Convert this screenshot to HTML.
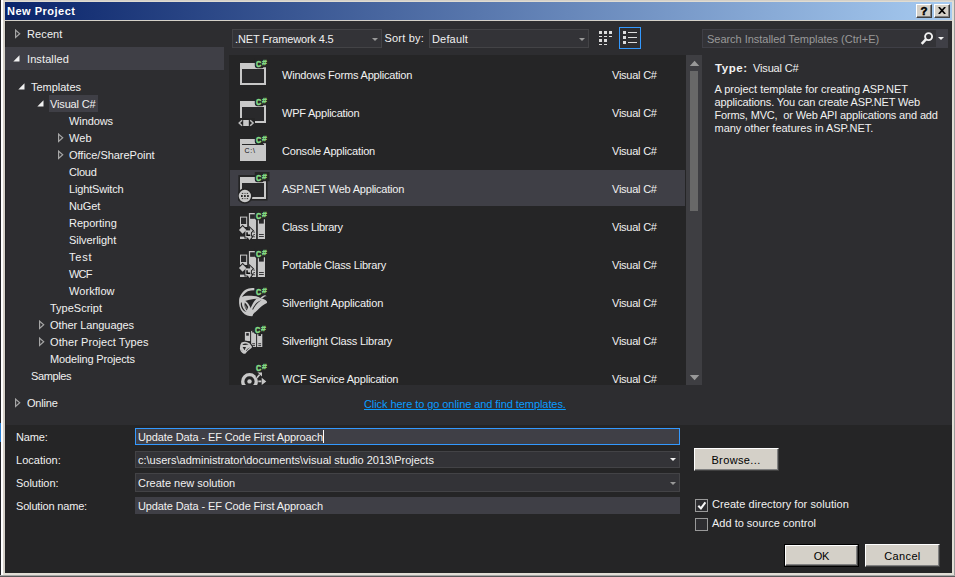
<!DOCTYPE html>
<html lang="en"><head><meta charset="utf-8"><title>New Project</title>
<style>
html,body{margin:0;padding:0;}
body{width:955px;height:577px;overflow:hidden;background:#d4d0c8;position:relative;font-family:"Liberation Sans", "DejaVu Sans", sans-serif;font-size:11px;line-height:17px;color:#f1f1f1;}
div,span,a,svg{position:absolute;box-sizing:border-box;}
.t{white-space:pre;letter-spacing:-0.15px;}
.btn{background:#d4d0c8;border:1px solid;border-color:#fff #404040 #404040 #fff;box-shadow:inset -1px -1px 0 #808080;color:#000;text-align:center;}

</style></head><body>
<div style="left:0px;top:0px;width:955px;height:577px;background:#d4d0c8;"></div>
<div style="left:0px;top:1px;width:955px;height:1px;background:#e0dcd2;"></div>
<div style="left:0px;top:0px;width:1px;height:577px;background:#222226;"></div>
<div style="left:1px;top:0px;width:2px;height:575px;background:#ffffff;"></div>
<div style="left:952px;top:2px;width:2px;height:573px;background:#e2dfd6;"></div>
<div style="left:954px;top:0px;width:1px;height:577px;background:#9a9a9a;"></div>
<div style="left:3px;top:573px;width:951px;height:2px;background:#e2dfd6;"></div>
<div style="left:0px;top:575px;width:955px;height:1px;background:#a8a8a8;"></div>
<div style="left:0px;top:576px;width:955px;height:1px;background:#5a5a5a;"></div>
<div style="left:0px;top:423px;width:1px;height:19px;background:#2a7fd0;"></div>
<div style="left:5px;top:2px;width:947px;height:18px;background:linear-gradient(90deg,#0a246a 0%,#a6caf0 100%);"></div>
<span class="t" style="left:7px;top:3px;letter-spacing:0.50px;color:#fff;font-weight:bold;">New Project</span>
<div class="btn" style="left:916px;top:4px;width:16px;height:14px;"></div>
<div class="btn" style="left:934px;top:4px;width:16px;height:14px;"></div>
<span class="t" style="left:920.500px;top:3px;color:#000;font-weight:bold;font-size:11.500px;-webkit-text-stroke:0.500px #000;line-height:17px;letter-spacing:0">?</span>
<svg style="left:938px;top:7px" width="8" height="7" viewBox="0 0 8 7"><line x1="0.800" y1="0" x2="7.200" y2="7" stroke="#000" stroke-width="1.700"/><line x1="7.200" y1="0" x2="0.800" y2="7" stroke="#000" stroke-width="1.700"/></svg>
<div style="left:5px;top:21px;width:947px;height:404px;background:#2d2d30;"></div>
<div style="left:5px;top:425px;width:947px;height:148px;background:#252526;"></div>
<div style="left:5px;top:21px;width:1px;height:552px;background:#222225;"></div>
<div style="left:229px;top:55px;width:457px;height:330px;background:#252526;"></div>
<div style="left:686px;top:55px;width:16px;height:330px;background:#3e3e42;"></div>
<div style="left:690px;top:71px;width:8px;height:140px;background:#686868;"></div>
<svg style="left:689px;top:60px" width="12" height="7" viewBox="0 0 12 7"><path d="M0.800 6.100L5.550 0.700 10.300 6.100z" fill="#999"/></svg>
<svg style="left:689px;top:374px" width="12" height="7" viewBox="0 0 12 7"><path d="M0.800 1L5.550 6.300 10.300 1z" fill="#999"/></svg>
<div style="left:5px;top:47px;width:219px;height:23px;background:#3f3f46;"></div>
<div style="left:49px;top:95px;width:49px;height:17px;background:#3f3f46;"></div>
<span class="t" style="left:27px;top:26px;letter-spacing:0.11px;">Recent</span>
<svg style="left:15px;top:29px" width="6" height="10" viewBox="0 0 6 10"><path d="M0.600 1.100L4.700 4.800 0.600 8.500z" fill="none" stroke="#a6a6a6" stroke-width="1.2"/></svg>
<span class="t" style="left:27px;top:51px;letter-spacing:0.10px;">Installed</span>
<svg style="left:13px;top:55px" width="7" height="7" viewBox="0 0 7 7"><path d="M6.5 0.3V6.5H0.3z" fill="#f1f1f1"/></svg>
<span class="t" style="left:31px;top:79px;letter-spacing:-0.02px;">Templates</span>
<svg style="left:18px;top:83px" width="7" height="7" viewBox="0 0 7 7"><path d="M6.5 0.3V6.5H0.3z" fill="#f1f1f1"/></svg>
<span class="t" style="left:50px;top:96px;letter-spacing:-0.15px;">Visual C#</span>
<svg style="left:37px;top:100px" width="7" height="7" viewBox="0 0 7 7"><path d="M6.5 0.3V6.5H0.3z" fill="#f1f1f1"/></svg>
<span class="t" style="left:69px;top:113px;letter-spacing:-0.10px;">Windows</span>
<span class="t" style="left:69px;top:130px;letter-spacing:0.04px;">Web</span>
<svg style="left:58px;top:133px" width="6" height="10" viewBox="0 0 6 10"><path d="M0.600 1.100L4.700 4.800 0.600 8.500z" fill="none" stroke="#a6a6a6" stroke-width="1.2"/></svg>
<span class="t" style="left:69px;top:147px;letter-spacing:-0.03px;">Office/SharePoint</span>
<svg style="left:58px;top:150px" width="6" height="10" viewBox="0 0 6 10"><path d="M0.600 1.100L4.700 4.800 0.600 8.500z" fill="none" stroke="#a6a6a6" stroke-width="1.2"/></svg>
<span class="t" style="left:69px;top:164px;letter-spacing:-0.24px;">Cloud</span>
<span class="t" style="left:69px;top:181px;letter-spacing:-0.16px;">LightSwitch</span>
<span class="t" style="left:69px;top:198px;letter-spacing:-0.12px;">NuGet</span>
<span class="t" style="left:69px;top:215px;letter-spacing:0.01px;">Reporting</span>
<span class="t" style="left:69px;top:232px;letter-spacing:-0.05px;">Silverlight</span>
<span class="t" style="left:69px;top:249px;letter-spacing:0.77px;">Test</span>
<span class="t" style="left:69px;top:266px;letter-spacing:-0.77px;">WCF</span>
<span class="t" style="left:69px;top:283px;letter-spacing:0.07px;">Workflow</span>
<span class="t" style="left:50px;top:300px;letter-spacing:0.00px;">TypeScript</span>
<span class="t" style="left:50px;top:317px;letter-spacing:-0.07px;">Other Languages</span>
<svg style="left:39px;top:320px" width="6" height="10" viewBox="0 0 6 10"><path d="M0.600 1.100L4.700 4.800 0.600 8.500z" fill="none" stroke="#a6a6a6" stroke-width="1.2"/></svg>
<span class="t" style="left:50px;top:334px;letter-spacing:0.08px;">Other Project Types</span>
<svg style="left:39px;top:337px" width="6" height="10" viewBox="0 0 6 10"><path d="M0.600 1.100L4.700 4.800 0.600 8.500z" fill="none" stroke="#a6a6a6" stroke-width="1.2"/></svg>
<span class="t" style="left:50px;top:351px;letter-spacing:-0.15px;">Modeling Projects</span>
<span class="t" style="left:31px;top:368px;letter-spacing:-0.40px;">Samples</span>
<span class="t" style="left:27px;top:395px;letter-spacing:-0.20px;">Online</span>
<svg style="left:15px;top:398px" width="6" height="10" viewBox="0 0 6 10"><path d="M0.600 1.100L4.700 4.800 0.600 8.500z" fill="none" stroke="#a6a6a6" stroke-width="1.2"/></svg>
<div style="left:232px;top:29px;width:150px;height:19px;background:#333337;border:1px solid #434346;"></div>
<span class="t" style="left:235px;top:31px;letter-spacing:-0.15px;color:#f1f1f1;">.NET Framework 4.5</span>
<svg style="left:372px;top:38px" width="6" height="3" viewBox="0 0 6 3"><path d="M0 0h6L3 3z" fill="#999"/></svg>
<span class="t" style="left:384.5px;top:30px;letter-spacing:0.20px;">Sort by:</span>
<div style="left:429px;top:29px;width:160px;height:19px;background:#333337;border:1px solid #434346;"></div>
<span class="t" style="left:432px;top:31px;letter-spacing:0.16px;color:#f1f1f1;">Default</span>
<svg style="left:579px;top:38px" width="6" height="3" viewBox="0 0 6 3"><path d="M0 0h6L3 3z" fill="#999"/></svg>
<div style="left:599px;top:31px;width:3px;height:3px;background:#dcdcdc;"></div>
<div style="left:599px;top:36px;width:3px;height:1px;background:#dcdcdc;"></div>
<div style="left:604px;top:31px;width:3px;height:3px;background:#dcdcdc;"></div>
<div style="left:604px;top:36px;width:3px;height:1px;background:#dcdcdc;"></div>
<div style="left:609px;top:31px;width:3px;height:3px;background:#dcdcdc;"></div>
<div style="left:609px;top:36px;width:3px;height:1px;background:#dcdcdc;"></div>
<div style="left:599px;top:39px;width:3px;height:3px;background:#dcdcdc;"></div>
<div style="left:599px;top:44px;width:3px;height:1px;background:#dcdcdc;"></div>
<div style="left:604px;top:39px;width:3px;height:3px;background:#dcdcdc;"></div>
<div style="left:604px;top:44px;width:3px;height:1px;background:#dcdcdc;"></div>
<div style="left:619px;top:27px;width:22px;height:22px;border:1px solid #3399ff;"></div>
<div style="left:623px;top:31px;width:3px;height:3px;background:#dcdcdc;"></div>
<div style="left:628px;top:32px;width:9px;height:1px;background:#dcdcdc;"></div>
<div style="left:623px;top:36px;width:3px;height:3px;background:#dcdcdc;"></div>
<div style="left:628px;top:37px;width:9px;height:1px;background:#dcdcdc;"></div>
<div style="left:623px;top:41px;width:3px;height:3px;background:#dcdcdc;"></div>
<div style="left:628px;top:42px;width:9px;height:1px;background:#dcdcdc;"></div>
<div style="left:702px;top:29px;width:246px;height:19px;background:#333337;border:1px solid #3f3f46;"></div>
<div style="left:936px;top:29px;width:12px;height:19px;background:#3f3f46;"></div>
<span class="t" style="left:707px;top:31px;letter-spacing:-0.03px;color:#999;">Search Installed Templates (Ctrl+E)</span>
<svg style="left:919px;top:30px" width="16" height="16" viewBox="0 0 16 16"><circle cx="9.6" cy="6.6" r="3.5" fill="none" stroke="#f1f1f1" stroke-width="1.9"/><path d="M7.100 9.200L2.700 13.800" stroke="#f1f1f1" stroke-width="2.600"/></svg>
<svg style="left:938px;top:37px" width="6" height="3" viewBox="0 0 6 3"><path d="M0 0h6L3 3z" fill="#f1f1f1"/></svg>
<div style="left:229px;top:55px;width:457px;height:330px;overflow:hidden;">
<span class="t" style="left:53px;top:12px;letter-spacing:-0.20px;">Windows Forms Application</span>
<span class="t" style="left:383px;top:12px;letter-spacing:-0.24px;">Visual C#</span>
<svg style="left:9px;top:3px" width="32" height="34" viewBox="0 0 32 34"><rect x="2" y="5" width="26" height="22" fill="#c8c8c8"/><rect x="4" y="11" width="22" height="14" fill="#29292b"/><path d="M16.8 0H31.500V9.200H25.5Q25 10.200 24 10.200H19.5Q16.8 10.200 16.8 7.500Z" fill="#252526"/><g font-family="Liberation Sans, sans-serif" font-weight="bold" fill="#86dc86" stroke="#86dc86"><text transform="translate(18.00 8.600) scale(0.8 1)" font-size="9" stroke-width="0.550">C</text><text transform="translate(24.10 7) scale(1.3 1)" font-size="6.600" stroke-width="0.300">#</text></g></svg>
<span class="t" style="left:53px;top:50px;letter-spacing:-0.22px;">WPF Application</span>
<span class="t" style="left:383px;top:50px;letter-spacing:-0.24px;">Visual C#</span>
<svg style="left:9px;top:41px" width="32" height="34" viewBox="0 0 32 34"><rect x="2" y="5" width="26" height="22" fill="#c8c8c8"/><rect x="4" y="11" width="22" height="14" fill="#29292b"/><rect x="0" y="22" width="17" height="10" fill="#252526"/><path d="M4.100 24.200L1.200 27l2.900 2.800M12.200 24.200l2.900 2.800-2.900 2.800" fill="none" stroke="#bdbdbd" stroke-width="1.500"/><rect x="5.2" y="24" width="5.6" height="6" fill="#c8c8c8"/><path d="M16.8 0H31.500V9.200H25.5Q25 10.200 24 10.200H19.5Q16.8 10.200 16.8 7.500Z" fill="#252526"/><g font-family="Liberation Sans, sans-serif" font-weight="bold" fill="#86dc86" stroke="#86dc86"><text transform="translate(18.00 8.600) scale(0.8 1)" font-size="9" stroke-width="0.550">C</text><text transform="translate(24.10 7) scale(1.3 1)" font-size="6.600" stroke-width="0.300">#</text></g></svg>
<span class="t" style="left:53px;top:88px;letter-spacing:-0.19px;">Console Application</span>
<span class="t" style="left:383px;top:88px;letter-spacing:-0.24px;">Visual C#</span>
<svg style="left:9px;top:79px" width="32" height="34" viewBox="0 0 32 34"><rect x="2" y="5" width="26" height="22" fill="#c8c8c8"/><rect x="4" y="10" width="22" height="1" fill="#29292b"/><text x="6.5" y="19" font-family="Liberation Sans, sans-serif" font-size="7" fill="#0c0c0c" letter-spacing="0.800">C:\</text><path d="M16.8 0H31.500V9.200H25.5Q25 10.200 24 10.200H19.5Q16.8 10.200 16.8 7.500Z" fill="#252526"/><g font-family="Liberation Sans, sans-serif" font-weight="bold" fill="#86dc86" stroke="#86dc86"><text transform="translate(18.00 8.600) scale(0.8 1)" font-size="9" stroke-width="0.550">C</text><text transform="translate(24.10 7) scale(1.3 1)" font-size="6.600" stroke-width="0.300">#</text></g></svg>
<div style="left:1px;top:115px;width:455px;height:36px;background:#3f3f46;"></div>
<span class="t" style="left:53px;top:126px;letter-spacing:-0.22px;">ASP.NET Web Application</span>
<span class="t" style="left:383px;top:126px;letter-spacing:-0.24px;">Visual C#</span>
<svg style="left:9px;top:117px" width="32" height="34" viewBox="0 0 32 34"><rect x="0.300" y="3" width="29.300" height="25.600" fill="#252526"/><rect x="2" y="5" width="26" height="22" fill="#c8c8c8"/><rect x="4" y="11" width="22" height="14" fill="#29292b"/><circle cx="6.9" cy="24.050" r="7.700" fill="#252526"/><circle cx="6.9" cy="24.050" r="6.200" fill="#c8c8c8"/><rect x="3.0" y="23.150" width="1.700" height="1.750" fill="#111"/><rect x="6.05" y="23.150" width="1.700" height="1.750" fill="#111"/><rect x="9.1" y="23.150" width="1.700" height="1.750" fill="#111"/><rect x="3.800" y="20.9" width="1.400" height="0.900" fill="#222"/><rect x="5.900" y="20.9" width="2.100" height="0.900" fill="#777"/><rect x="8.700" y="20.9" width="1.400" height="0.900" fill="#222"/><rect x="3.800" y="26.2" width="1.400" height="0.900" fill="#222"/><rect x="5.900" y="26.2" width="2.100" height="0.900" fill="#777"/><rect x="8.700" y="26.2" width="1.400" height="0.900" fill="#222"/><path d="M16.8 0H31.500V9.200H25.5Q25 10.200 24 10.200H19.5Q16.8 10.200 16.8 7.500Z" fill="#252526"/><g font-family="Liberation Sans, sans-serif" font-weight="bold" fill="#86dc86" stroke="#86dc86"><text transform="translate(18.00 8.600) scale(0.8 1)" font-size="9" stroke-width="0.550">C</text><text transform="translate(24.10 7) scale(1.3 1)" font-size="6.600" stroke-width="0.300">#</text></g></svg>
<span class="t" style="left:53px;top:164px;letter-spacing:-0.27px;">Class Library</span>
<span class="t" style="left:383px;top:164px;letter-spacing:-0.24px;">Visual C#</span>
<svg style="left:9px;top:155px" width="32" height="34" viewBox="0 0 32 34"><rect x="2" y="6.600" width="7.200" height="22.400" fill="#c8c8c8"/><rect x="3" y="7.600" width="5.200" height="6.400" fill="#29292b"/><rect x="10.900" y="3" width="7.200" height="26" fill="#c8c8c8"/><rect x="12.100" y="4.300" width="4.800" height="4.500" fill="#29292b"/><rect x="19.800" y="9" width="7.200" height="20" fill="#c8c8c8"/><rect x="21" y="8" width="4.800" height="5.600" fill="#29292b"/><rect x="21" y="24" width="4.800" height="0.900" fill="#29292b"/><rect x="21" y="26" width="4.800" height="0.900" fill="#29292b"/><rect x="15.500" y="21.600" width="1.300" height="1" fill="#29292b"/><rect x="15.500" y="24" width="1.300" height="1" fill="#29292b"/><rect x="15.500" y="26.300" width="1.300" height="1" fill="#29292b"/><rect x="1.500" y="17" width="8.500" height="9.600" fill="#252526"/><g stroke="#252526" stroke-width="2" stroke-linejoin="miter"><path d="M4.650 16.200l3.700 3.750-3.700 3.750-3.700-3.750z"/><rect x="7.400" y="20.400" width="5.500" height="7.100"/><path d="M12.100 18.100l2.700 2.700-2.700 2.500z"/><path d="M9 26.600h5.200l-2.700 3.400z"/></g><g fill="#c8c8c8"><path d="M4.650 16.200l3.700 3.750-3.700 3.750-3.700-3.750z"/><rect x="7.400" y="20.400" width="5.500" height="7.100"/><path d="M12.100 18.100l2.700 2.700-2.700 2.500z"/><path d="M9 26.600h5.200l-2.700 3.400z"/></g><path d="M8.300 22.300h1.500v2.200h2.400v1.500h-3.900z" fill="#0c0c0c"/><path d="M16.8 0H31.500V9.200H25.5Q25 10.200 24 10.200H19.5Q16.8 10.200 16.8 7.500Z" fill="#252526"/><g font-family="Liberation Sans, sans-serif" font-weight="bold" fill="#86dc86" stroke="#86dc86"><text transform="translate(18.00 8.600) scale(0.8 1)" font-size="9" stroke-width="0.550">C</text><text transform="translate(24.10 7) scale(1.3 1)" font-size="6.600" stroke-width="0.300">#</text></g></svg>
<span class="t" style="left:53px;top:202px;letter-spacing:-0.19px;">Portable Class Library</span>
<span class="t" style="left:383px;top:202px;letter-spacing:-0.24px;">Visual C#</span>
<svg style="left:9px;top:193px" width="32" height="34" viewBox="0 0 32 34"><rect x="2" y="6.600" width="7.200" height="22.400" fill="#c8c8c8"/><rect x="3" y="7.600" width="5.200" height="6.400" fill="#29292b"/><rect x="10.900" y="3" width="7.200" height="26" fill="#c8c8c8"/><rect x="12.100" y="4.300" width="4.800" height="4.500" fill="#29292b"/><rect x="19.800" y="9" width="7.200" height="20" fill="#c8c8c8"/><rect x="21" y="8" width="4.800" height="5.600" fill="#29292b"/><rect x="21" y="24" width="4.800" height="0.900" fill="#29292b"/><rect x="21" y="26" width="4.800" height="0.900" fill="#29292b"/><rect x="15.500" y="21.600" width="1.300" height="1" fill="#29292b"/><rect x="15.500" y="24" width="1.300" height="1" fill="#29292b"/><rect x="15.500" y="26.300" width="1.300" height="1" fill="#29292b"/><rect x="1.500" y="17" width="8.500" height="9.600" fill="#252526"/><g stroke="#252526" stroke-width="2" stroke-linejoin="miter"><path d="M4.650 16.200l3.700 3.750-3.700 3.750-3.700-3.750z"/><rect x="7.400" y="20.400" width="5.500" height="7.100"/><path d="M12.100 18.100l2.700 2.700-2.700 2.500z"/><path d="M9 26.600h5.200l-2.700 3.400z"/></g><g fill="#c8c8c8"><path d="M4.650 16.200l3.700 3.750-3.700 3.750-3.700-3.750z"/><rect x="7.400" y="20.400" width="5.500" height="7.100"/><path d="M12.100 18.100l2.700 2.700-2.700 2.500z"/><path d="M9 26.600h5.200l-2.700 3.400z"/></g><path d="M8.300 22.300h1.500v2.200h2.400v1.500h-3.900z" fill="#0c0c0c"/><path d="M16.8 0H31.500V9.200H25.5Q25 10.200 24 10.200H19.5Q16.8 10.200 16.8 7.500Z" fill="#252526"/><g font-family="Liberation Sans, sans-serif" font-weight="bold" fill="#86dc86" stroke="#86dc86"><text transform="translate(18.00 8.600) scale(0.8 1)" font-size="9" stroke-width="0.550">C</text><text transform="translate(24.10 7) scale(1.3 1)" font-size="6.600" stroke-width="0.300">#</text></g></svg>
<span class="t" style="left:53px;top:240px;letter-spacing:-0.12px;">Silverlight Application</span>
<span class="t" style="left:383px;top:240px;letter-spacing:-0.24px;">Visual C#</span>
<svg style="left:9px;top:231px" width="32" height="34" viewBox="0 0 32 34"><g transform="translate(0 0) scale(1.0)"><path d="M16.4 1.9C13.500 2 11 2.300 9.200 2.900 6.800 3.800 5 5.300 3.900 7.200 2.400 9.200 1.300 11.400 1.100 13.800c-.2 2.300 0 4.600.5 6.600.6 2.200 1.600 4.200 3 5.900 1.300 1.500 2.800 2.600 4.600 3.300 1.500.5 3.100.7 4.900.7l1-2.000C14.500 26.500 13.500 23.500 12.100 20.800 11 18.600 9.800 16.800 8.200 15.500L5.200 14.100 4.200 10.800C4.600 9.900 5.200 9.100 5.900 8.500 7 7.100 8.300 6 9.800 5.200c2-.6 4.200-.9 6.600-.9z" fill="#c8c8c8"/><path d="M4.200 10.800C5.800 10.200 7.500 9.800 9.200 9.700c2.200-.1 4.400 0 6.600.2l2.600.4c1.400.5 2.700 1.100 4 1.700.8-1 1.700-1.800 2.600-2.300.7-.4 1.400-.6 2-.7.700.1 1.200.600 1.600 1.300-1.400-.3-2.600.300-3.600 1.700l-2.600 1.100c-1.300-.300-2.700-.400-4-.300l-2.600.3c-1.800.300-3.600.600-5.300 1-1.800.500-3.600 1-5.300 1.700l-2.900 1z" fill="#c8c8c8"/><path d="M14.100 30.300c.2-.700.600-1.300 1-2 1.200-1.400 2.500-2.700 4-3.900 1.600-1.700 3.400-3.300 5.200-4.700 1.500-1 3-1.900 4.600-2.600.200-.500.200-1.100 0-1.600-.500-.700-1.100-1.300-1.900-1.700-1.400-.900-3-1.400-4.600-1.600-1.400-.1-2.700.100-4 .600-1.300 1.300-2.400 2.700-3.300 4.300-1.300 2.300-2.400 4.700-3.300 7.300z" fill="#c8c8c8"/><path d="M14.200 23.200c1.100-2.200 2.500-4.200 4.200-6.100 1.500-1.400 3.300-2.400 5.300-3-1.800 1-3.400 2.200-4.700 3.700-1.600 1.800-2.900 3.800-4 6z" fill="#252526"/><path d="M3.800 16.600c.1 2.200.6 4.200 1.600 6 .8 1.400 1.800 2.500 3 3.300-1.800-.300-3.200-1.300-4.200-2.900-1.200-1.900-1.600-4-1.300-6.400z" fill="#252526"/><path d="M6.800 16.600c1.400 1.200 2.500 2.700 3.400 4.500l-1.400 3.300c-.900-.900-1.600-2-2-3.300-.4-1.400-.4-2.900 0-4.500z" fill="#252526"/><path d="M7.600 19c.8 1.600 1 3.100.7 4.600-.700-1.400-.900-2.900-.7-4.600z" fill="#c8c8c8"/></g><path d="M16.8 0H31.500V9.200H25.5Q25 10.200 24 10.200H19.5Q16.8 10.200 16.8 7.500Z" fill="#252526"/><g font-family="Liberation Sans, sans-serif" font-weight="bold" fill="#86dc86" stroke="#86dc86"><text transform="translate(18.00 8.600) scale(0.8 1)" font-size="9" stroke-width="0.550">C</text><text transform="translate(24.10 7) scale(1.3 1)" font-size="6.600" stroke-width="0.300">#</text></g></svg>
<span class="t" style="left:53px;top:278px;letter-spacing:-0.19px;">Silverlight Class Library</span>
<span class="t" style="left:383px;top:278px;letter-spacing:-0.24px;">Visual C#</span>
<svg style="left:9px;top:269px" width="32" height="34" viewBox="0 0 32 34"><rect x="6.9" y="7.900" width="5.200" height="9.200" fill="#c8c8c8"/><rect x="8.200" y="9.100" width="2.600" height="2.600" fill="#29292b"/><rect x="13.100" y="6.900" width="5" height="16.100" fill="#c8c8c8"/><rect x="14.200" y="6.900" width="2.800" height="1.600" fill="#29292b"/><rect x="19.100" y="9.900" width="5.200" height="13.100" fill="#c8c8c8"/><rect x="20.400" y="9" width="2.600" height="3" fill="#29292b"/><rect x="14.200" y="19.300" width="2.800" height="0.900" fill="#29292b"/><rect x="14.200" y="21.200" width="2.800" height="0.900" fill="#29292b"/><rect x="20.300" y="19.300" width="2.800" height="0.900" fill="#29292b"/><rect x="20.300" y="21.200" width="2.800" height="0.900" fill="#29292b"/><path d="M3.500 18.500Q7.700 16.600 11.500 19.200L13.900 22.600Q14.300 23.600 13.200 24.200 9.500 26.500 7.300 29.800L5.600 29.800Q2.200 27.800 1.900 24.400 1.700 21 3.500 18.500Z" fill="#c8c8c8" stroke="#252526" stroke-width="2.200" paint-order="stroke"/><path d="M4.200 20.400Q7.300 18.700 10.600 20.200 7.300 21.700 4.200 20.400Z" fill="#252526"/><path d="M4.600 22.900L8 23.100 6.500 26.200Z" fill="#252526"/><path d="M7.900 26.400Q9.800 24.200 12.300 23.300 10 25 8.300 26.900Z" fill="#252526"/><path d="M3.300 25.200Q3.900 26.700 4.900 27.500 3.600 27 3.300 25.200Z" fill="#252526"/><path d="M15.8 0H31.500V9.200H24.5Q24 10.200 23 10.200H18.5Q15.8 10.200 15.8 7.500Z" fill="#252526"/><g font-family="Liberation Sans, sans-serif" font-weight="bold" fill="#86dc86" stroke="#86dc86"><text transform="translate(17.00 8.600) scale(0.8 1)" font-size="9" stroke-width="0.550">C</text><text transform="translate(23.10 7) scale(1.3 1)" font-size="6.600" stroke-width="0.300">#</text></g></svg>
<span class="t" style="left:53px;top:316px;letter-spacing:-0.21px;">WCF Service Application</span>
<span class="t" style="left:383px;top:316px;letter-spacing:-0.24px;">Visual C#</span>
<svg style="left:9px;top:307px" width="32" height="34" viewBox="0 0 32 34"><circle cx="11.500" cy="19.400" r="6.750" fill="none" stroke="#c8c8c8" stroke-width="3.300"/><circle cx="11.500" cy="19.400" r="2.200" fill="#c8c8c8"/><path d="M18.700 16l3.500-4M20.600 19.400h4" stroke="#252526" stroke-width="3.400" fill="none"/><path d="M18.800 15.900l3.300-3.800M20.300 19.400h4.200" stroke="#c8c8c8" stroke-width="1.600" fill="none"/><path d="M19.300 10.200h4.700v4.200zM23.700 15.800l4.600 3.600-4.600 3.600z" fill="#c8c8c8" stroke="#252526" stroke-width="0.800" paint-order="stroke"/><path d="M16.8 0H31.500V9.200H25.5Q25 10.200 24 10.200H19.5Q16.8 10.200 16.8 7.500Z" fill="#252526"/><g font-family="Liberation Sans, sans-serif" font-weight="bold" fill="#86dc86" stroke="#86dc86"><text transform="translate(18.00 8.600) scale(0.8 1)" font-size="9" stroke-width="0.550">C</text><text transform="translate(24.10 7) scale(1.3 1)" font-size="6.600" stroke-width="0.300">#</text></g></svg>
</div>
<a class="t" style="left:364px;top:396px;letter-spacing:-0.07px;color:#0a9cff;text-decoration:underline;">Click here to go online and find templates.</a>
<span class="t" style="left:715px;top:60px;letter-spacing:0.54px;font-size:11.5px;font-weight:bold;">Type:</span>
<span class="t" style="left:753px;top:60px;letter-spacing:-0.15px;">Visual C#</span>
<span class="t" style="left:714.5px;top:81px;letter-spacing:-0.02px;">A project template for creating ASP.NET</span>
<span class="t" style="left:714.5px;top:94px;letter-spacing:-0.12px;">applications. You can create ASP.NET Web</span>
<span class="t" style="left:714.5px;top:107px;letter-spacing:-0.16px;">Forms, MVC,  or Web API applications and add</span>
<span class="t" style="left:714.5px;top:120px;letter-spacing:-0.02px;">many other features in ASP.NET.</span>
<span class="t" style="left:16px;top:429px;letter-spacing:-0.15px;">Name:</span>
<span class="t" style="left:16px;top:452px;letter-spacing:0.02px;">Location:</span>
<span class="t" style="left:16px;top:475px;letter-spacing:-0.03px;">Solution:</span>
<span class="t" style="left:16px;top:498px;letter-spacing:-0.17px;">Solution name:</span>
<div style="left:135px;top:428px;width:545px;height:17px;background:#3f3f46;border:1px solid #3399ff;"></div>
<span class="t" style="left:138px;top:429px;letter-spacing:-0.11px;">Update Data - EF Code First Approach</span>
<div style="left:323px;top:430px;width:1px;height:13px;background:#ffffff;"></div>
<div style="left:135px;top:451px;width:545px;height:17px;background:#333337;border:1px solid #434346;"></div>
<span class="t" style="left:138px;top:452px;letter-spacing:0.00px;">c:\users\administrator\documents\visual studio 2013\Projects</span>
<div style="left:135px;top:473px;width:545px;height:19px;background:#333337;border:1px solid #434346;"></div>
<span class="t" style="left:138px;top:475px;letter-spacing:0.00px;">Create new solution</span>
<div style="left:135px;top:497px;width:545px;height:17px;background:#3f3f46;"></div>
<span class="t" style="left:138px;top:498px;letter-spacing:-0.11px;">Update Data - EF Code First Approach</span>
<svg style="left:670px;top:458px" width="6" height="3" viewBox="0 0 6 3"><path d="M0 0h6L3 3z" fill="#f1f1f1"/></svg>
<svg style="left:670px;top:482px" width="6" height="3" viewBox="0 0 6 3"><path d="M0 0h6L3 3z" fill="#999"/></svg>
<div class="btn" style="left:694px;top:448px;width:85px;height:23px;"></div>
<span class="t" style="left:693.5px;top:452px;width:85px;text-align:center;color:#000;letter-spacing:0.37px;">Browse...</span>
<div style="left:784px;top:544px;width:75px;height:23px;background:#000;"></div>
<div class="btn" style="left:785px;top:545px;width:73px;height:21px;"></div>
<span class="t" style="left:784px;top:548px;width:75px;text-align:center;color:#000;letter-spacing:-0.21px;">OK</span>
<div class="btn" style="left:865px;top:544px;width:75px;height:23px;"></div>
<span class="t" style="left:865px;top:548px;width:75px;text-align:center;color:#000;letter-spacing:0.35px;">Cancel</span>
<div style="left:695px;top:499px;width:13px;height:13px;background:#2d2d30;border:1px solid #999;"></div>
<svg style="left:697px;top:501px" width="9" height="9" viewBox="0 0 9 9"><path d="M1.300 4.800L3.900 7.400 8.400 1.400" fill="none" stroke="#f8f8f8" stroke-width="2.100"/></svg>
<div style="left:695px;top:518px;width:13px;height:13px;background:#2d2d30;border:1px solid #999;"></div>
<span class="t" style="left:712px;top:496px;letter-spacing:0.06px;">Create directory for solution</span>
<span class="t" style="left:712px;top:515px;letter-spacing:0.00px;">Add to source control</span>
</body></html>
